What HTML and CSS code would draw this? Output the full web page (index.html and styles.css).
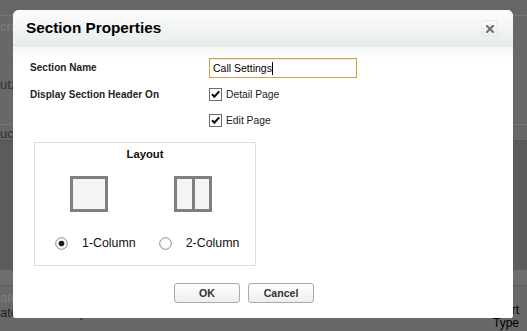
FILE: index.html
```html
<!DOCTYPE html>
<html>
<head>
<meta charset="utf-8">
<link rel="stylesheet" href="styles.css">
</head>
<body>
<div class="page">
  <div class="bg-row r0"></div>
  <div class="bg-row r1"><span class="bg-text light">crip</span></div>
  <div class="bg-row r2"><span class="bg-text">utz</span></div>
  <div class="bg-row r3"><span class="bg-text">uch</span></div>
  <div class="bg-row r4"></div>
  <div class="bg-row r5"></div>
  <div class="bg-row r6">
    <div class="bg-line"><span class="bg-text light">ato</span></div>
    <div class="bg-line split">
      <span class="bg-text dark">atoc's Call Report</span>
      <span class="bg-arrow">▾</span>
      <span class="bg-right dark">portatore Call Report<br>Type</span>
    </div>
  </div>
</div>

<div class="dialog">
  <div class="dlg-head">
    <h1 class="dlg-title">Section Properties</h1>
    <button class="close-btn" aria-label="Close">
      <svg width="8" height="8" viewBox="0 0 8 8"><path d="M1 1L7 7M7 1L1 7" stroke="#6e6e6e" stroke-width="2" stroke-linecap="square"/></svg>
    </button>
  </div>
  <div class="dlg-body">
    <div class="form-grid">
      <div class="lbl lbl-name">Section Name</div>
      <div class="val"><div class="text-input">Call Settings<span class="caret"></span></div></div>
      <div class="lbl lbl-disp">Display Section Header On</div>
      <div class="val checks">
        <label class="check">
          <svg width="13" height="13" viewBox="0 0 13 13"><rect x="0.5" y="0.5" width="12" height="12" fill="#fff" stroke="#6b6b6b"/><path d="M3 6.3L5.4 8.8L10.2 3.4" fill="none" stroke="#111" stroke-width="2.1"/></svg>
          <span>Detail Page</span>
        </label>
        <label class="check">
          <svg width="13" height="13" viewBox="0 0 13 13"><rect x="0.5" y="0.5" width="12" height="12" fill="#fff" stroke="#6b6b6b"/><path d="M3 6.3L5.4 8.8L10.2 3.4" fill="none" stroke="#111" stroke-width="2.1"/></svg>
          <span>Edit Page</span>
        </label>
      </div>
    </div>

    <div class="layout-box">
      <div class="layout-title">Layout</div>
      <div class="layout-opts">
        <div class="opt">
          <svg width="38" height="36" viewBox="0 0 38 36"><rect x="1.5" y="1.5" width="35" height="33" fill="#f4f4f4" stroke="#7f7f7f" stroke-width="3"/></svg>
          <div class="radio-row">
            <svg width="13" height="13" viewBox="0 0 13 13"><circle cx="6.5" cy="6.5" r="5.8" fill="#f6f6f6" stroke="#8a8a8a"/><circle cx="6.5" cy="6.5" r="2.8" fill="#1a1a1a"/></svg>
            <span>1-Column</span>
          </div>
        </div>
        <div class="opt">
          <svg width="38" height="36" viewBox="0 0 38 36"><rect x="1.5" y="1.5" width="35" height="33" fill="#f4f4f4" stroke="#7f7f7f" stroke-width="3"/><path d="M19.5 1.5V34.5" stroke="#7f7f7f" stroke-width="3"/></svg>
          <div class="radio-row">
            <svg width="13" height="13" viewBox="0 0 13 13"><circle cx="6.5" cy="6.5" r="5.8" fill="#fbfbfb" stroke="#8a8a8a"/></svg>
            <span>2-Column</span>
          </div>
        </div>
      </div>
    </div>

    <div class="buttons">
      <button class="btn">OK</button>
      <button class="btn">Cancel</button>
    </div>
  </div>
</div>
</body>
</html>
```
FILE: styles.css
```css
* { box-sizing: border-box; }
html, body {
  margin: 0;
  padding: 0;
}
body {
  width: 527px;
  height: 331px;
  overflow: hidden;
  background: #666;
  font-family: "Liberation Sans", Arial, sans-serif;
  position: relative;
}

/* dimmed background page */
.page {
  display: flex;
  flex-direction: column;
}
.bg-row { position: relative; }
.r0 { height: 16px; background: #676767; border-bottom: 1px solid #767676; }
.r1 { height: 57px; background: #686868; border-bottom: 1px solid #5a6d73; padding-top: 3px; }
.r2 { height: 52px; background: #686868; border-bottom: 1px solid #777; padding-top: 4px; }
.r3 { height: 15px; background: #686868; padding-top: 1px; }
.r4 { height: 130px; background: #5b5b5b; border-top: 1px solid #555; }
.r5 { height: 16px; background: #6e6e6e; border-bottom: 1px solid #5a5a5a; }
.r6 { height: 45px; background: #686868; padding-top: 4px; }
.bg-text {
  font-size: 13px;
  color: #333;
  white-space: nowrap;
  display: block;
  line-height: 15px;
}
.bg-text.light { color: #7e7e7e; }
.bg-text.dark { color: #1f1f1f; }
.bg-line { height: 15px; }
.bg-line.split {
  display: flex;
  align-items: flex-start;
  height: 26px;
}
.bg-arrow {
  font-size: 10px;
  color: #111;
  margin-left: 24px;
  margin-top: 4px;
  outline: 1px dotted #888;
  line-height: 8px;
}
.bg-right {
  margin-left: auto;
  margin-right: 8px;
  font-size: 12px;
  line-height: 13px;
  text-align: right;
  margin-top: -1px;
}

/* dialog (lies over the page) */
.dialog {
  position: absolute;
  left: 13px;
  top: 10px;
  width: 500px;
  height: 308px;
  background: #fff;
  border-radius: 6px 6px 3px 3px;
  overflow: hidden;
  display: flex;
  flex-direction: column;
}
.dlg-head {
  height: 36px;
  flex: none;
  display: flex;
  align-items: center;
  justify-content: space-between;
  padding: 0 15px 0 13px;
  background: linear-gradient(#fdfdfd, #e9ecec);
  border-bottom: 1px solid #dfe2e2;
}
.dlg-title {
  margin: 0;
  font-size: 15.3px;
  font-weight: bold;
  color: #000;
}
.close-btn {
  width: 17px;
  height: 17px;
  padding: 0;
  margin-top: 2px;
  border: 1px solid #e9e9e9;
  border-radius: 2px;
  background: linear-gradient(#f8f8f8, #eeeeee);
  display: flex;
  align-items: center;
  justify-content: center;
}
.close-btn svg { display: block; }

.dlg-body {
  flex: 1;
  background: linear-gradient(#f2f3f3, #ffffff 12px);
  padding: 12px 0 0 0;
  display: flex;
  flex-direction: column;
}
.form-grid {
  display: grid;
  grid-template-columns: 179px 1fr;
  padding-left: 17px;
  row-gap: 10px;
}
.lbl {
  font-size: 10px;
  font-weight: bold;
  color: #222;
  letter-spacing: 0.05px;
}
.lbl-name { padding-top: 4px; }
.lbl-disp { padding-top: 1px; }
.text-input {
  width: 148px;
  height: 20px;
  border: 1px solid #d3a04a;
  box-shadow: inset 0 1px 1px rgba(0,0,0,0.08);
  font-size: 10.5px;
  color: #000;
  padding: 0 0 0 3px;
  display: flex;
  align-items: center;
  white-space: nowrap;
}
.caret {
  display: inline-block;
  width: 1px;
  height: 13px;
  background: #000;
}
.checks {
  display: flex;
  flex-direction: column;
  gap: 13px;
}
.check {
  display: flex;
  align-items: center;
  gap: 4px;
  font-size: 10.3px;
  color: #1a1a1a;
  height: 13px;
}
.check svg { display: block; flex: none; }

.layout-box {
  margin: 15px 0 0 21px;
  width: 222px;
  height: 124px;
  border: 1px solid #dedede;
  display: flex;
  flex-direction: column;
  align-items: center;
  padding-top: 4px;
}
.layout-title {
  font-size: 11.3px;
  font-weight: bold;
  color: #111;
  line-height: 14px;
}
.layout-opts {
  display: flex;
  align-self: stretch;
  padding-left: 20px;
  gap: 23px;
  margin-top: 15px;
}
.opt {
  display: flex;
  flex-direction: column;
  align-items: flex-start;
}
.opt > svg {
  display: block;
  margin-left: 15px;
}
.radio-row {
  display: flex;
  align-items: center;
  margin-top: 24px;
  font-size: 12.4px;
  color: #111;
}
.radio-row svg { display: block; flex: none; margin-right: 14px; }

.buttons {
  display: flex;
  gap: 8px;
  padding-left: 161px;
  margin-top: 17px;
}
.btn {
  width: 66px;
  height: 20px;
  padding: 0;
  border: 1px solid #a9a9a9;
  border-radius: 3px;
  background: linear-gradient(#ffffff, #ededed);
  font-family: "Liberation Sans", Arial, sans-serif;
  font-size: 10.6px;
  font-weight: bold;
  color: #333;
}
```
